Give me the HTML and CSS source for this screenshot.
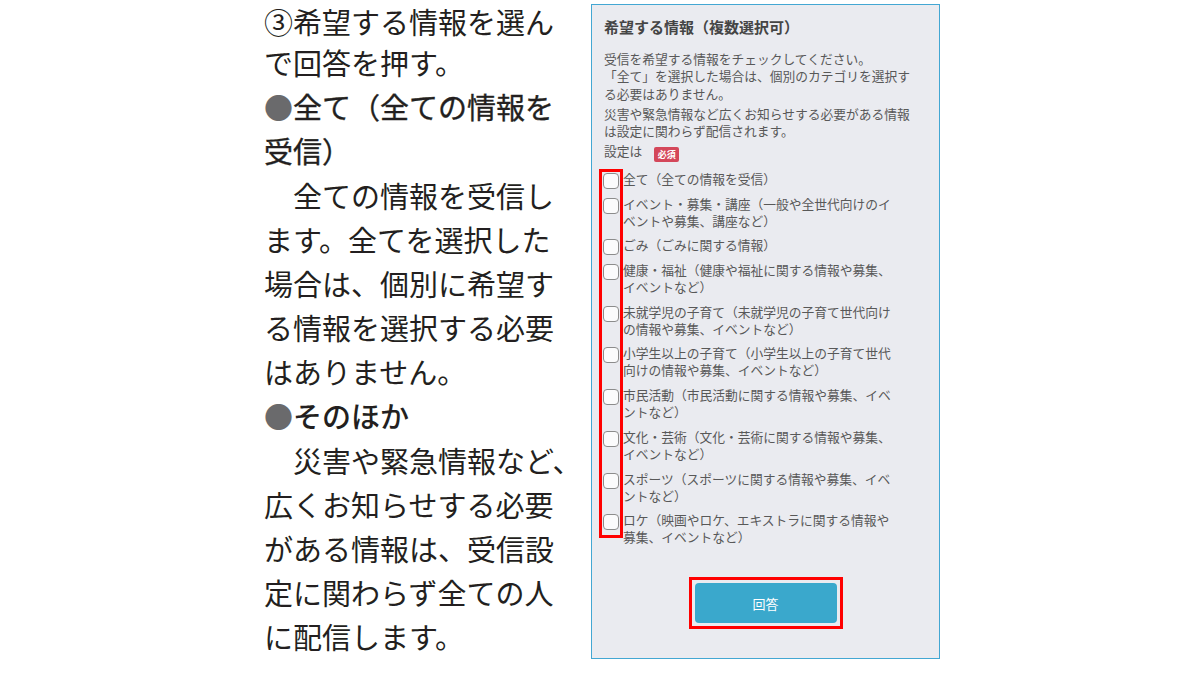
FILE: index.html
```html
<!DOCTYPE html>
<html lang="ja">
<head>
<meta charset="utf-8">
<title>希望する情報</title>
<link rel="stylesheet" href="styles.css">
</head>
<body>
<div class="page">
  <div class="guide">
    <p><span class="l1">③希望する情報を選ん</span>で回答を押す。</p>
    <p class="head"><span class="dot">●</span>全て（全ての情報を<br>受信）</p>
    <p>　全ての情報を受信し<br>ます。全てを選択した<br>場合は、個別に希望す<br>る情報を選択する必要<br>はありません。</p>
    <p class="head strong"><span class="dot">●</span>そのほか</p>
    <p>　災害や緊急情報など、<br>広くお知らせする必要<br>がある情報は、受信設<br>定に関わらず全ての人<br>に配信します。</p>
  </div>

  <section class="panel">
    <h2 class="panel-title">希望する情報（複数選択可）</h2>
    <p class="desc first">受信を希望する情報をチェックしてください。<br>「全て」を選択した場合は、個別のカテゴリを選択す<br>る必要はありません。</p>
    <p class="desc">災害や緊急情報など広くお知らせする必要がある情報<br>は設定に関わらず配信されます。</p>
    <p class="desc">設定は<span class="badge">必須</span></p>

    <ul class="checks">
      <li><span class="box"></span><span class="lbl">全て（全ての情報を受信）</span></li>
      <li><span class="box"></span><span class="lbl">イベント・募集・講座（一般や全世代向けのイ<br>ベントや募集、講座など）</span></li>
      <li><span class="box"></span><span class="lbl">ごみ（ごみに関する情報）</span></li>
      <li><span class="box"></span><span class="lbl">健康・福祉（健康や福祉に関する情報や募集、<br>イベントなど）</span></li>
      <li><span class="box"></span><span class="lbl">未就学児の子育て（未就学児の子育て世代向け<br>の情報や募集、イベントなど）</span></li>
      <li><span class="box"></span><span class="lbl">小学生以上の子育て（小学生以上の子育て世代<br>向けの情報や募集、イベントなど）</span></li>
      <li><span class="box"></span><span class="lbl">市民活動（市民活動に関する情報や募集、イベ<br>ントなど）</span></li>
      <li><span class="box"></span><span class="lbl">文化・芸術（文化・芸術に関する情報や募集、<br>イベントなど）</span></li>
      <li><span class="box"></span><span class="lbl">スポーツ（スポーツに関する情報や募集、イベ<br>ントなど）</span></li>
      <li><span class="box"></span><span class="lbl">ロケ（映画やロケ、エキストラに関する情報や<br>募集、イベントなど）</span></li>
      <li class="mark-col" aria-hidden="true"></li>
    </ul>

    <div class="actions">
      <div class="mark-btn"><button class="submit" type="button">回答</button></div>
    </div>
  </section>
</div>
</body>
</html>
```

FILE: styles.css
```css
* {
  box-sizing: border-box;
}

html,
body {
  margin: 0;
  padding: 0;
  background: #ffffff;
}

body {
  font-family: "Noto Sans CJK JP", "Noto Sans", sans-serif;
}

.page {
  display: flex;
  align-items: flex-start;
  padding-left: 264px;
  padding-top: 4px;
}

/* left explanatory text */
.guide {
  width: 327px;
  margin-top: -4px;
  font-size: 29px;
  line-height: 44.15px;
  color: #231f20;
  white-space: nowrap;
}

.guide p {
  margin: 0;
}

.guide .l1 {
  display: block;
  padding-top: 3px;
  line-height: 36.15px;
  margin-bottom: 1px;
}

.guide .head {
  font-weight: 400;
  -webkit-text-stroke: 0.35px #231f20;
}

.guide .head.strong {
  font-weight: 500;
  -webkit-text-stroke: 0;
}

.dot {
  color: #6a6a6c;
  font-weight: 400;
  -webkit-text-stroke: 0;
}

/* form panel */
.panel {
  width: 349px;
  height: 655px;
  border: 1px solid #43a7d3;
  background: #eaebf0;
  padding: 12px 12px 0 12px;
  color: #585858;
  font-size: 12.75px;
  white-space: nowrap;
}

.panel-title {
  margin: 0;
  font-size: 15px;
  line-height: 20px;
  font-weight: 700;
  color: #454545;
}

.desc {
  margin: 2.5px 0 0;
  line-height: 17.5px;
}

.desc.first {
  margin-top: 12.5px;
}

.badge {
  display: inline-block;
  width: 25px;
  height: 15px;
  margin-left: 12px;
  line-height: 15px;
  font-size: 9px;
  font-weight: 700;
  text-align: center;
  color: #ffffff;
  background: #d4475a;
  border-radius: 2px;
  vertical-align: -2px;
}

.checks {
  position: relative;
  list-style: none;
  margin: 8px 0 0;
  padding: 0;
}

.checks li {
  display: flex;
  align-items: flex-start;
  gap: 4px;
  line-height: 17px;
  margin-bottom: 7.7px;
}

.checks li:nth-last-child(2) {
  margin-bottom: 0;
}

.box {
  flex: none;
  width: 16px;
  height: 16px;
  margin-left: -1px;
  margin-top: 3px;
  margin-bottom: -3px;
  border: 1px solid #8c8c8c;
  border-radius: 4px;
  background: #fbfbfc;
}

.checks .mark-col {
  position: absolute;
  left: -5px;
  top: -1px;
  bottom: 7px;
  width: 24px;
  margin: 0;
  border: 3px solid #ff0000;
}

.actions {
  display: flex;
  justify-content: center;
  margin-top: 32px;
}

.mark-btn {
  padding: 3px;
  border: 3px solid #ff0000;
}

.submit {
  display: block;
  width: 142px;
  height: 40px;
  border: none;
  border-radius: 4px;
  background: #3aa8cc;
  color: #ffffff;
  font-family: "Noto Sans CJK JP", "Noto Sans", sans-serif;
  font-size: 13px;
  padding: 0;
}
```
